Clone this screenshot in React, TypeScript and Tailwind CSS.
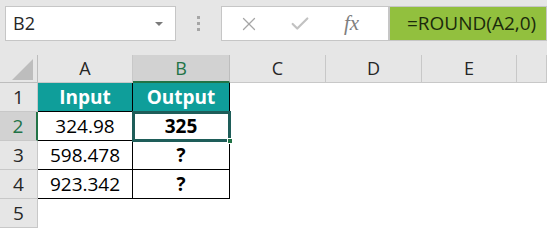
import { X, Check } from 'lucide-react';

const cols = ['A', 'B', 'C', 'D', 'E', ''];
const rows = [
  { n: 1, a: 'Input', b: 'Output', head: true },
  { n: 2, a: '324.98', b: '325' },
  { n: 3, a: '598.478', b: '?' },
  { n: 4, a: '923.342', b: '?' },
  { n: 5 },
];

const font = { fontFamily: '"Open Sans", "Noto Sans", sans-serif' };

export default function App() {
  return (
    <div className="w-[547px] h-[228px] overflow-hidden bg-white" style={font}>
      {/* formula bar */}
      <div className="h-[55px] bg-[#e6e6e6] flex items-start pt-[6px] pl-[5px]">
        <div className="w-[171px] h-[35px] bg-white border border-[#c6c6c6] flex items-center justify-between pl-[7px] pr-[12px]">
          <span className="text-[18px] text-[#262626]">B2</span>
          <span className="w-0 h-0 border-l-[4px] border-r-[4px] border-t-[4px] border-l-transparent border-r-transparent border-t-[#7a7a7a]" />
        </div>
        <div className="w-[45px] h-[35px] flex flex-col items-center justify-center gap-[3px]">
          <span className="w-[3px] h-[3px] bg-[#a6a6a6]" />
          <span className="w-[3px] h-[3px] bg-[#a6a6a6]" />
          <span className="w-[3px] h-[3px] bg-[#a6a6a6]" />
        </div>
        <div className="w-[168px] h-[35px] bg-white border border-[#c6c6c6] flex items-center pl-[16px]">
          <X size={22} strokeWidth={1.4} className="text-[#a6a6a6]" />
          <Check size={22} strokeWidth={2.4} className="text-[#c2c2c2] ml-[29px]" />
          <span
            className="ml-[33px] text-[21px] italic text-[#7f7f7f] leading-none"
            style={{ fontFamily: '"Liberation Serif", serif' }}
          >
            fx
          </span>
        </div>
        <div className="flex-1 h-[35px] bg-[#92c03e] border border-[#c6c6c6] flex items-center pl-[17px]">
          <span className="text-[19px] text-[#1b2a0c]">=ROUND(A2,0)</span>
        </div>
      </div>

      {/* grid */}
      <div className="relative grid grid-cols-[38px_95px_97px_96px_96px_95px_30px] grid-rows-[28px_29px_29px_29px_29px_29px]">
        <div className="bg-[#e6e6e6] border-r border-b border-[#bdbdbd] flex items-end justify-end pr-[4px] pb-[2px]">
          <svg width="21" height="21" viewBox="0 0 21 21">
            <polygon points="21,0 21,21 0,21" fill="#bdbdbd" />
          </svg>
        </div>
        {cols.map((c, i) => (
          <div
            key={i}
            className={
              c === 'B'
                ? 'bg-[#d2d2d2] border-r border-[#bdbdbd] border-b-2 border-b-[#217346] flex items-center justify-center text-[18px] text-[#217346]'
                : 'bg-[#e6e6e6] border-r border-b border-[#c8c8c8] flex items-center justify-center text-[18px] text-[#262626]'
            }
          >
            {c}
          </div>
        ))}

        {rows.map((r) => (
          <Row key={r.n} {...r} />
        ))}

        {/* active cell */}
        <div className="absolute left-[132px] top-[56px] w-[99px] h-[31px] border-[3px] border-[#1e5d59] pointer-events-none" />
        <div className="absolute left-[227px] top-[83px] w-[6px] h-[6px] bg-[#217346] border border-white" />
      </div>
    </div>
  );
}

function Row({ n, a, b, head }: { n: number; a?: string; b?: string; head?: boolean }) {
  const sel = n === 2;
  const tbl = a !== undefined;
  return (
    <>
      <div
        className={
          sel
            ? 'bg-[#d2d2d2] border-b border-[#c8c8c8] border-r-2 border-r-[#217346] flex items-center justify-center text-[19px] text-[#217346]'
            : 'bg-[#e6e6e6] border-b border-r border-[#c8c8c8] flex items-center justify-center text-[19px] text-[#262626]'
        }
      >
        {n}
      </div>
      {tbl ? (
        <>
          <div
            className={`border-r border-b border-black flex items-center justify-center text-[19px] ${
              head ? 'bg-[#0f9e9a] text-white font-bold' : 'text-black'
            }`}
          >
            {a}
          </div>
          <div
            className={`border-r border-b border-black flex items-center justify-center text-[19px] ${
              head ? 'bg-[#0f9e9a] text-white font-bold' : 'text-black font-bold'
            }`}
          >
            {b}
          </div>
        </>
      ) : (
        <>
          <div />
          <div />
        </>
      )}
      <div />
      <div />
      <div />
      <div />
    </>
  );
}
